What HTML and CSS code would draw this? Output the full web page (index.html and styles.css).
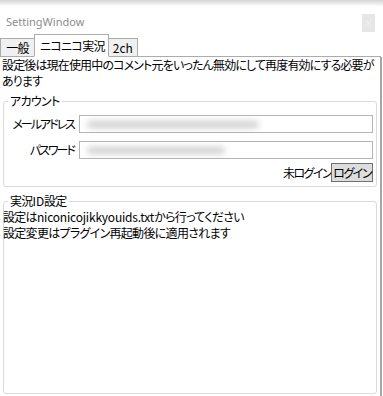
FILE: index.html
```html
<!DOCTYPE html>
<html lang="ja">
<head>
<meta charset="utf-8">
<title>SettingWindow</title>
<link rel="stylesheet" href="styles.css">
</head>
<body>
<div class="window">
  <div class="topshade"></div>
  <div class="titlebar">
    <span class="title">SettingWindow</span>
    <span class="close">×</span>
  </div>
  <div class="tabs">
    <div class="tab">一般</div>
    <div class="tab active">ニコニコ実況</div>
    <div class="tab">2ch</div>
  </div>
  <div class="panel">
    <p class="note">設定後は現在使用中のコメント元をいったん無効にして再度有効にする必要があります</p>
    <fieldset class="group account">
      <legend>アカウント</legend>
      <div class="form">
        <label class="lbl">メールアドレス</label>
        <div class="input"><span class="blur mail"></span></div>
        <label class="lbl">パスワード</label>
        <div class="input"><span class="blur pass"></span></div>
      </div>
      <div class="loginrow">
        <span class="status">未ログイン</span>
        <button class="btn">ログイン</button>
      </div>
    </fieldset>
    <fieldset class="group jikkyo">
      <legend>実況<span class="latin">ID</span>設定</legend>
      <div class="info">設定は<span class="latin">niconicojikkyouids.txt</span>から行ってください<br>設定変更はプラグイン再起動後に適用されます</div>
    </fieldset>
  </div>
</div>
</body>
</html>
```

FILE: styles.css
```css
html, body {
  margin: 0;
  padding: 0;
  background: #ffffff;
}
body {
  width: 383px;
  height: 396px;
  overflow: hidden;
  font-family: "Noto Sans CJK JP", "Noto Sans", sans-serif;
  font-feature-settings: "palt";
  font-size: 12px;
  letter-spacing: -0.7px;
  color: #000;
}
.latin {
  letter-spacing: -0.2px;
}
.window {
  width: 383px;
  height: 396px;
  display: flex;
  flex-direction: column;
}
.topshade {
  height: 7px;
  background: linear-gradient(#d4d4d4, #f4f4f4 70%, #ffffff);
}
.titlebar {
  height: 28px;
  display: flex;
  align-items: center;
  justify-content: space-between;
  padding: 0 8px 0 6px;
}
.title {
  font-family: "Noto Sans", sans-serif;
  font-size: 11px;
  letter-spacing: 0;
  color: #8c8c8c;
  margin-top: 1px;
}
.close {
  width: 13px;
  height: 18px;
  margin-top: 4px;
  background: #e6e6e6;
  color: #f4f4f4;
  font-size: 9px;
  letter-spacing: 0;
  line-height: 18px;
  text-align: center;
}
.tabs {
  height: 21px;
  width: 381px;
  display: flex;
  align-items: flex-end;
  border-bottom: 1px solid #acacac;
}
.tab {
  height: 17px;
  line-height: 17px;
  padding: 0 2px;
  border: 1px solid #acacac;
  border-bottom: none;
  background: #f0f0f0;
  box-sizing: content-box;
  white-space: nowrap;
}
.tab:first-child {
  width: 29px;
  text-align: center;
}
.tab.active {
  height: 21px;
  line-height: 21px;
  margin-bottom: -1px;
  background: #ffffff;
  padding: 0 3px 0 5px;
  border-bottom: 1px solid #ffffff;
  margin-left: -1px;
  position: relative;
  z-index: 1;
}
.tab:last-child {
  margin-left: -1px;
  padding: 0 4px;
  letter-spacing: 0;
}
.panel {
  flex: 1;
  width: 380px;
  border-right: 2px solid #a6a6a6;
  display: flex;
  flex-direction: column;
}
.note {
  margin: 0;
  padding: 0 1px 0 2px;
  line-height: 16px;
  letter-spacing: -0.85px;
}
.group {
  margin: 4px 3px 0 3px;
  padding: 0 3px 4px 0;
  border: 1px solid #dadada;
  border-radius: 3px;
  min-width: 0;
}
.group legend {
  margin-left: 4px;
  padding: 0 2px;
  line-height: 16px;
}
.form {
  display: grid;
  grid-template-columns: 70px 1fr;
  column-gap: 5px;
  row-gap: 8px;
  margin-top: 6px;
  align-items: center;
}
.lbl {
  text-align: right;
  line-height: 18px;
  white-space: nowrap;
  letter-spacing: -2px;
}
.input {
  height: 16px;
  border: 1px solid #b4b4b4;
  background: #fff;
  display: flex;
  align-items: center;
  overflow: hidden;
}
.blur {
  display: block;
  height: 7px;
  margin-left: 7px;
  background: #cfcfcf;
  filter: blur(3px);
  border-radius: 4px;
}
.blur.mail { width: 172px; }
.blur.pass { width: 138px; }
.loginrow {
  display: flex;
  justify-content: flex-end;
  align-items: center;
  margin-top: 4px;
  letter-spacing: -1.5px;
}
.status {
  line-height: 19px;
}
.btn {
  height: 19px;
  padding: 0 1px;
  margin: 0;
  font: inherit;
  letter-spacing: inherit;
  line-height: 17px;
  background: #dddddd;
  border: 1px solid #707070;
  border-radius: 0;
  color: #000;
}
.jikkyo {
  flex: 1;
  margin-top: 6px;
  margin-bottom: 2px;
  padding: 0;
}
.info {
  line-height: 16px;
  margin-left: -1px;
}
```
